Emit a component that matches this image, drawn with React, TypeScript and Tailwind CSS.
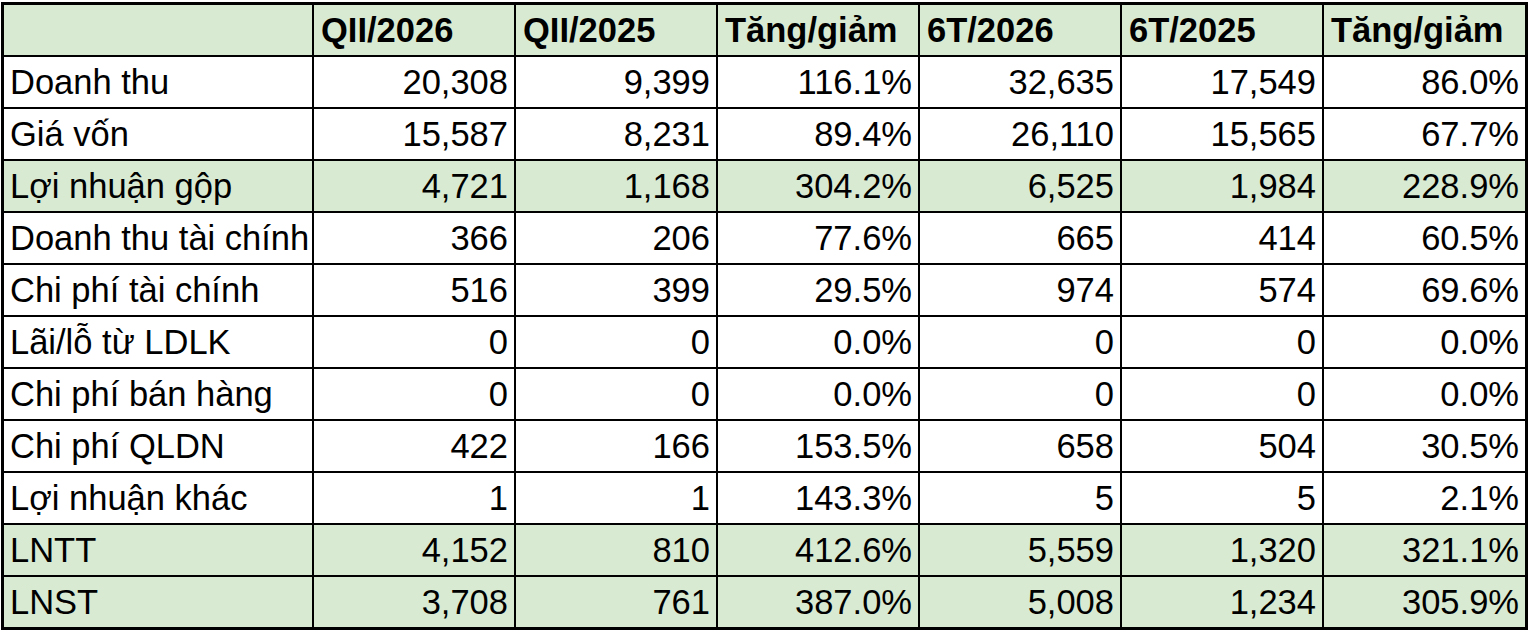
import React from "react";

const header = ["", "QII/2026", "QII/2025", "Tăng/giảm", "6T/2026", "6T/2025", "Tăng/giảm"];

const rows: { label: string; vals: string[]; green?: boolean }[] = [
  { label: "Doanh thu", vals: ["20,308", "9,399", "116.1%", "32,635", "17,549", "86.0%"] },
  { label: "Giá vốn", vals: ["15,587", "8,231", "89.4%", "26,110", "15,565", "67.7%"] },
  { label: "Lợi nhuận gộp", vals: ["4,721", "1,168", "304.2%", "6,525", "1,984", "228.9%"], green: true },
  { label: "Doanh thu tài chính", vals: ["366", "206", "77.6%", "665", "414", "60.5%"] },
  { label: "Chi phí tài chính", vals: ["516", "399", "29.5%", "974", "574", "69.6%"] },
  { label: "Lãi/lỗ từ LDLK", vals: ["0", "0", "0.0%", "0", "0", "0.0%"] },
  { label: "Chi phí bán hàng", vals: ["0", "0", "0.0%", "0", "0", "0.0%"] },
  { label: "Chi phí QLDN", vals: ["422", "166", "153.5%", "658", "504", "30.5%"] },
  { label: "Lợi nhuận khác", vals: ["1", "1", "143.3%", "5", "5", "2.1%"] },
  { label: "LNTT", vals: ["4,152", "810", "412.6%", "5,559", "1,320", "321.1%"], green: true },
  { label: "LNST", vals: ["3,708", "761", "387.0%", "5,008", "1,234", "305.9%"], green: true },
];

export default function App() {
  return (
    <div
      className="w-[1528px] h-[630px] bg-white pt-[2px] pl-[1px] overflow-hidden"
      style={{ fontFamily: '"Liberation Sans", Arial, sans-serif' }}
    >
      <div className="inline-grid grid-cols-[308px_200px_200px_200px_200px_200px_201px] auto-rows-[50px] gap-[2px] bg-black p-[3px] text-black text-[34.5px] leading-none">
        {header.map((h, i) => (
          <div key={"h" + i} className="bg-[#d9ead3] flex items-center pl-[7px] font-bold">
            {h}
          </div>
        ))}
        {rows.map((r) => (
          <React.Fragment key={r.label}>
            <div className={`${r.green ? "bg-[#d9ead3]" : "bg-white"} flex items-center pl-[6px] whitespace-nowrap`}>
              {r.label}
            </div>
            {r.vals.map((v, j) => (
              <div
                key={j}
                className={`${r.green ? "bg-[#d9ead3]" : "bg-white"} flex items-center justify-end pr-[6px]`}
              >
                {v}
              </div>
            ))}
          </React.Fragment>
        ))}
      </div>
    </div>
  );
}
